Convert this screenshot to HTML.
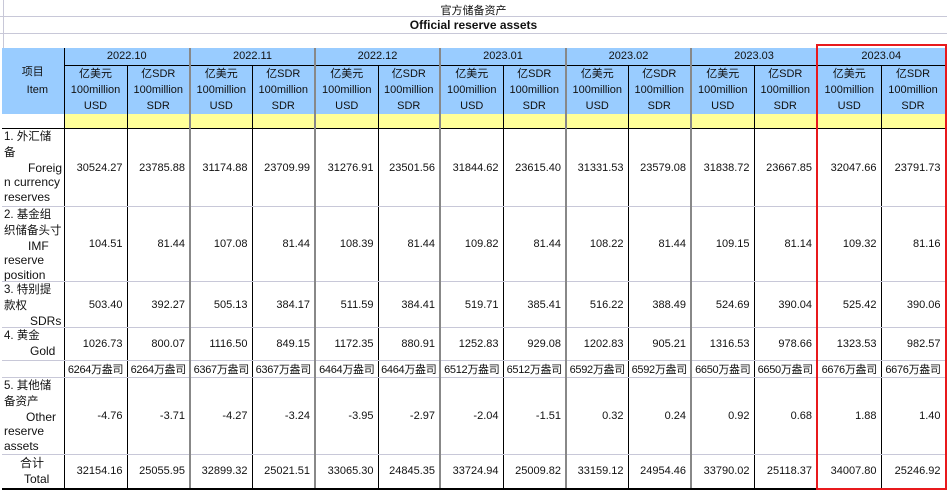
<!DOCTYPE html>
<html><head><meta charset="utf-8"><style>
body{margin:0;width:947px;height:490px;background:#fff;overflow:hidden;position:relative;font-family:"Liberation Sans","Noto Sans CJK SC",sans-serif;font-size:11px;color:#111}
.hl{position:absolute;left:0;width:947px;height:1px;background:#c8c8d8}
.vl{position:absolute;top:0;width:1px;height:48px;background:#c8c8d8;left:3px}
.t{position:absolute;left:0;width:947px;text-align:center}
table{position:absolute;left:2px;top:48px;border-collapse:collapse;table-layout:fixed}
td{padding:0;overflow:hidden;white-space:nowrap;border-bottom:1px solid #c8c8d8;border-right:1px solid #000;box-sizing:border-box}
td.g{border-right:2px solid #888}
.hd td{background:#99ccff;text-align:center}
.yr td{border-bottom:1px solid #000;height:17px}
.un td{height:48px;line-height:16px;border-bottom:none}
.ye td{background:#ffff99;height:15px;border-bottom:1px solid #000}
.d td{text-align:right;padding-right:4px}
td.l{text-align:left;padding:0 0 0 2px;border-right:1px solid #000;vertical-align:top;white-space:nowrap;font-size:12px}
td.l div{overflow:hidden;line-height:14.8px}
.c{font-size:11.5px}
.oz td{font-size:11px;padding:0 1px;text-align:center;letter-spacing:-0.3px}
.red{position:absolute;left:816px;top:44px;width:127px;height:442px;border:2px solid #e8191c}
</style></head><body>
<div class="hl" style="top:16px"></div><div class="hl" style="top:33px"></div><div class="vl"></div>
<div class="t" style="top:2px;font-size:11px">官方储备资产</div>
<div class="t" style="top:18px;font-weight:bold;font-size:12px">Official reserve assets</div>
<table>
<colgroup><col style="width:62px"><col style="width:63px"><col style="width:63px"><col style="width:62px"><col style="width:63px"><col style="width:63px"><col style="width:62px"><col style="width:63px"><col style="width:63px"><col style="width:62px"><col style="width:63px"><col style="width:63px"><col style="width:63px"><col style="width:64px"><col style="width:64px"></colgroup>
<tr class="hd yr"><td rowspan="2" style="border-bottom:none;line-height:18px;vertical-align:middle;text-align:center;border-right:1px solid #000">项目<br>&nbsp;&nbsp;&nbsp;Item</td><td colspan="2" class="g">2022.10</td><td colspan="2" class="g">2022.11</td><td colspan="2" class="g">2022.12</td><td colspan="2" class="g">2023.01</td><td colspan="2" class="g">2023.02</td><td colspan="2" class="g">2023.03</td><td colspan="2">2023.04</td></tr>
<tr class="hd un"><td>亿美元<br>100million<br>USD</td><td class="g">亿SDR<br>100million<br>SDR</td><td>亿美元<br>100million<br>USD</td><td class="g">亿SDR<br>100million<br>SDR</td><td>亿美元<br>100million<br>USD</td><td class="g">亿SDR<br>100million<br>SDR</td><td>亿美元<br>100million<br>USD</td><td class="g">亿SDR<br>100million<br>SDR</td><td>亿美元<br>100million<br>USD</td><td class="g">亿SDR<br>100million<br>SDR</td><td>亿美元<br>100million<br>USD</td><td class="g">亿SDR<br>100million<br>SDR</td><td>亿美元<br>100million<br>USD</td><td>亿SDR<br>100million<br>SDR</td></tr>
<tr class="ye"><td style="background:#fff"></td><td></td><td class="g"></td><td></td><td class="g"></td><td></td><td class="g"></td><td></td><td class="g"></td><td></td><td class="g"></td><td></td><td class="g"></td><td></td><td></td></tr>
<tr class="d" style="height:78px"><td class="l"><div style="height:77px"><span class="c">1. 外汇储<br>备</span><br><span style="padding-left:24px">Foreig</span><br>n currency<br>reserves</div></td><td>30524.27</td><td class="g">23785.88</td><td>31174.88</td><td class="g">23709.99</td><td>31276.91</td><td class="g">23501.56</td><td>31844.62</td><td class="g">23615.40</td><td>31331.53</td><td class="g">23579.08</td><td>31838.72</td><td class="g">23667.85</td><td>32047.66</td><td>23791.73</td></tr>
<tr class="d" style="height:75px"><td class="l"><div style="height:74px"><span class="c">2. 基金组<br>织储备头寸</span><br><span style="padding-left:24px">IMF</span><br>reserve<br>position</div></td><td>104.51</td><td class="g">81.44</td><td>107.08</td><td class="g">81.44</td><td>108.39</td><td class="g">81.44</td><td>109.82</td><td class="g">81.44</td><td>108.22</td><td class="g">81.44</td><td>109.15</td><td class="g">81.14</td><td>109.32</td><td>81.16</td></tr>
<tr class="d" style="height:46px"><td class="l"><div style="height:45px"><span class="c">3. 特别提<br>款权</span><br><span style="padding-left:26px">SDRs</span></div></td><td>503.40</td><td class="g">392.27</td><td>505.13</td><td class="g">384.17</td><td>511.59</td><td class="g">384.41</td><td>519.71</td><td class="g">385.41</td><td>516.22</td><td class="g">388.49</td><td>524.69</td><td class="g">390.04</td><td>525.42</td><td>390.06</td></tr>
<tr class="d" style="height:33px"><td class="l"><div style="height:32px"><span class="c">4. 黄金</span><br><span style="padding-left:26px">Gold</span></div></td><td>1026.73</td><td class="g">800.07</td><td>1116.50</td><td class="g">849.15</td><td>1172.35</td><td class="g">880.91</td><td>1252.83</td><td class="g">929.08</td><td>1202.83</td><td class="g">905.21</td><td>1316.53</td><td class="g">978.66</td><td>1323.53</td><td>982.57</td></tr>
<tr class="oz" style="height:17px"><td class="l"></td><td>6264万盎司</td><td class="g">6264万盎司</td><td>6367万盎司</td><td class="g">6367万盎司</td><td>6464万盎司</td><td class="g">6464万盎司</td><td>6512万盎司</td><td class="g">6512万盎司</td><td>6592万盎司</td><td class="g">6592万盎司</td><td>6650万盎司</td><td class="g">6650万盎司</td><td>6676万盎司</td><td>6676万盎司</td></tr>
<tr class="d" style="height:77px"><td class="l"><div style="height:76px"><span class="c">5. 其他储<br>备资产</span><br><span style="padding-left:22px">Other</span><br>reserve<br>assets</div></td><td>-4.76</td><td class="g">-3.71</td><td>-4.27</td><td class="g">-3.24</td><td>-3.95</td><td class="g">-2.97</td><td>-2.04</td><td class="g">-1.51</td><td>0.32</td><td class="g">0.24</td><td>0.92</td><td class="g">0.68</td><td>1.88</td><td>1.40</td></tr>
<tr class="d" style="height:34px"><td class="l" style="border-bottom:2px solid #000"><div style="height:32px;line-height:16px"><span style="padding-left:16px">合计</span><br><span style="padding-left:20px">Total</span></div></td><td style="border-bottom:2px solid #000">32154.16</td><td class="g" style="border-bottom:2px solid #000">25055.95</td><td style="border-bottom:2px solid #000">32899.32</td><td class="g" style="border-bottom:2px solid #000">25021.51</td><td style="border-bottom:2px solid #000">33065.30</td><td class="g" style="border-bottom:2px solid #000">24845.35</td><td style="border-bottom:2px solid #000">33724.94</td><td class="g" style="border-bottom:2px solid #000">25009.82</td><td style="border-bottom:2px solid #000">33159.12</td><td class="g" style="border-bottom:2px solid #000">24954.46</td><td style="border-bottom:2px solid #000">33790.02</td><td class="g" style="border-bottom:2px solid #000">25118.37</td><td style="border-bottom:2px solid #000">34007.80</td><td style="border-bottom:2px solid #000">25246.92</td></tr>
</table>
<div class="red"></div>
</body></html>
